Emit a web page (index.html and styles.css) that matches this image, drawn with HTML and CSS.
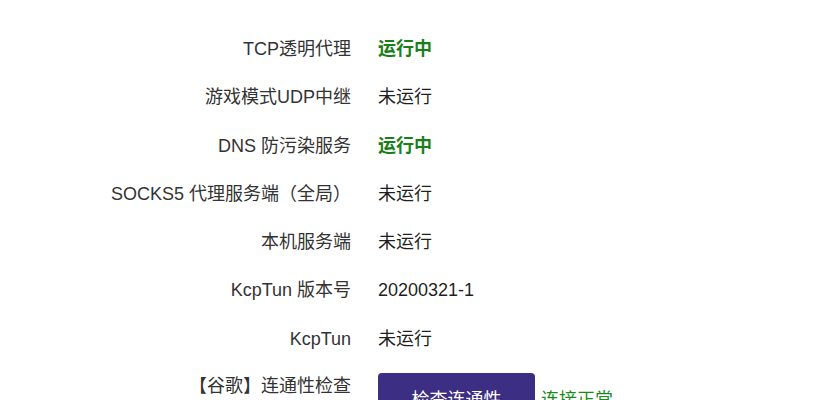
FILE: index.html
```html
<!DOCTYPE html>
<html lang="zh-CN">
<head>
<meta charset="utf-8">
<link rel="stylesheet" href="styles.css">
</head>
<body>
<div class="status-table">
  <div class="row"><div class="label">TCP透明代理</div><div class="value running">运行中</div></div>
  <div class="row"><div class="label">游戏模式UDP中继</div><div class="value">未运行</div></div>
  <div class="row"><div class="label">DNS 防污染服务</div><div class="value running">运行中</div></div>
  <div class="row"><div class="label">SOCKS5 代理服务端（全局）</div><div class="value">未运行</div></div>
  <div class="row"><div class="label">本机服务端</div><div class="value">未运行</div></div>
  <div class="row"><div class="label">KcpTun 版本号</div><div class="value">20200321-1</div></div>
  <div class="row"><div class="label">KcpTun</div><div class="value">未运行</div></div>
  <div class="row row-check">
    <div class="label">【谷歌】连通性检查</div>
    <div class="value check">
      <button class="btn" type="button">检查连通性</button>
      <span class="ok">连接正常</span>
    </div>
  </div>
</div>
</body>
</html>
```
FILE: styles.css
```css
html, body {
  margin: 0;
  padding: 0;
  background: #ffffff;
}
body {
  font-family: "Liberation Sans", "Noto Sans CJK SC", sans-serif;
  font-size: 18px;
  color: #333333;
  overflow: hidden;
  height: 400px;
}
.status-table {
  padding-top: 25px;
}
.row {
  display: grid;
  grid-template-columns: 351px 1fr;
  column-gap: 27px;
  height: 48.3px;
  line-height: 48.3px;
}
.label {
  text-align: right;
  color: #333333;
  white-space: nowrap;
}
.value {
  color: #1f1f1f;
  white-space: nowrap;
}
.running {
  color: #1a7f1a;
  font-weight: bold;
}
.row-check {
  height: auto;
  line-height: 46px;
}
.check {
  display: flex;
  align-items: center;
  gap: 6px;
  padding-top: 10px;
  line-height: normal;
}
.btn {
  font-family: inherit;
  font-size: 18px;
  color: #ffffff;
  background: #3c2e82;
  border: none;
  border-radius: 4px;
  width: 157px;
  height: 50px;
  padding: 0;
}
.ok {
  color: #1a8a1a;
  font-size: 18px;
}
```
